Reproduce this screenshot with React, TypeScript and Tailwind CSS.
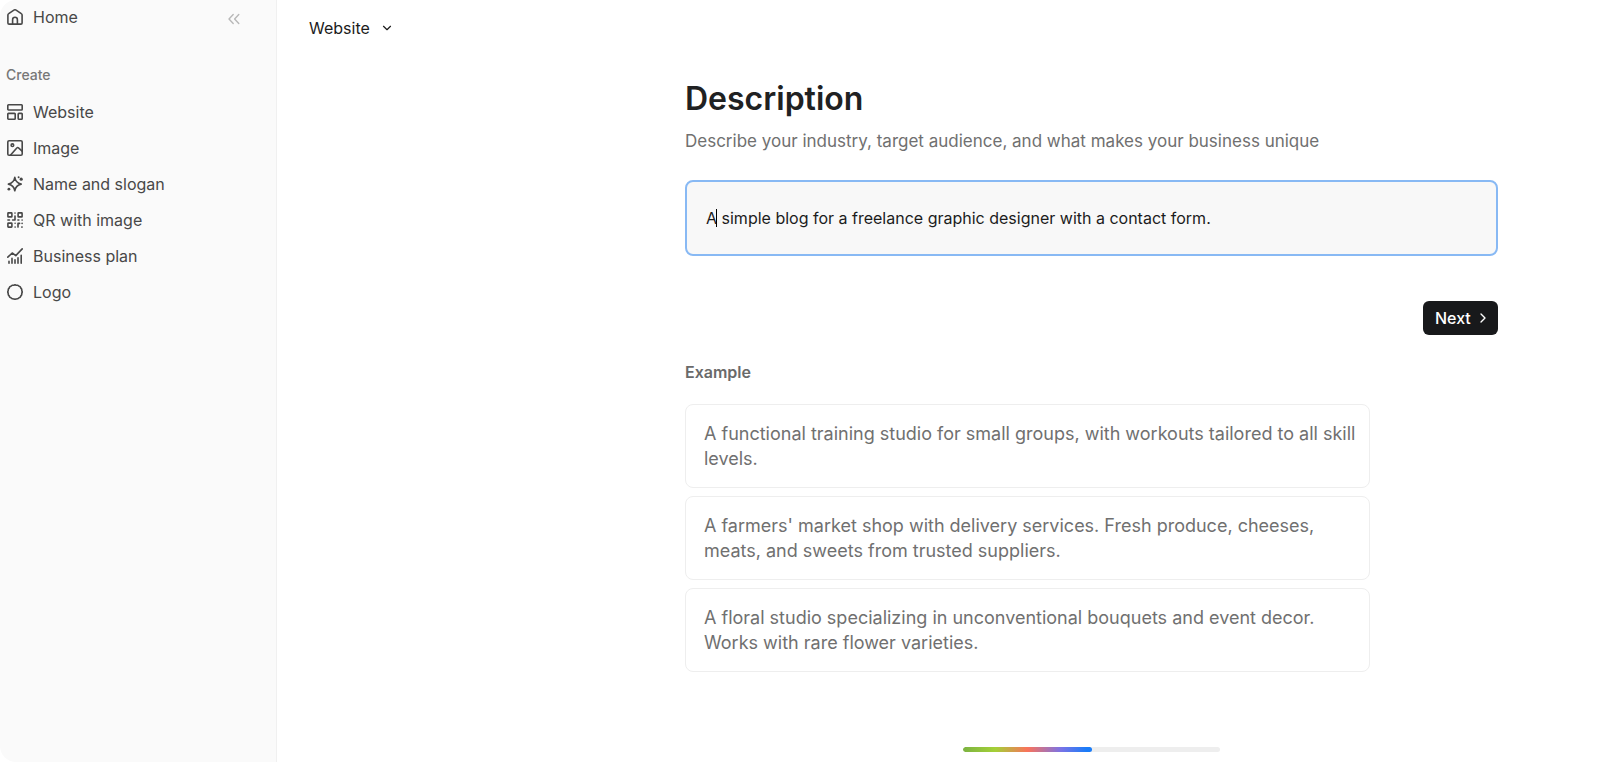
import { useState } from "react";
import type { ReactNode } from "react";
import { ChevronDown, ChevronRight } from "lucide-react";

const stroke = {
  fill: "none",
  stroke: "currentColor",
  strokeWidth: 1.6,
  strokeLinecap: "round",
  strokeLinejoin: "round",
} as const;

function Icon({ children }: { children: ReactNode }) {
  return (
    <svg viewBox="0 0 16 16" className="size-4 shrink-0" aria-hidden="true" {...stroke}>
      {children}
    </svg>
  );
}

const HomeIcon = () => (
  <Icon>
    <path d="M.9 6c0-.6.3-1.100.8-1.400L6.900 1.100c.7-.4 1.500-.4 2.200 0l5.200 3.500c.5.3.8.8.8 1.400v7.900c0 .7-.5 1.200-1.200 1.200H2.100c-.7 0-1.200-.5-1.200-1.200z" />
    <path d="M5.600 15v-4.300a2.400 2.400 0 0 1 4.800 0V15" />
  </Icon>
);

const WebsiteIcon = () => (
  <Icon>
    <rect x=".8" y=".8" width="14.400" height="5.200" rx=".7" />
    <rect x=".8" y="9.400" width="7.400" height="5.800" rx=".7" />
    <rect x="11.200" y="9.400" width="4" height="5.800" rx=".7" />
  </Icon>
);

const ImageIcon = () => (
  <Icon>
    <rect x=".8" y=".8" width="14.400" height="14.400" rx="1.300" />
    <circle cx="5.400" cy="5.200" r="1.300" />
    <path d="m3.600 15 6.200-7c.5-.6 1.200-.6 1.700-.1l3.600 3.300" />
  </Icon>
);

const SparkleIcon = () => (
  <Icon>
    <path d="M7.800 1.400c.7 4.200 2.200 5.900 6.400 6.700-4.200.8-5.700 2.500-6.400 6.700-.7-4.200-2.200-5.900-6.400-6.700 4.200-.8 5.700-2.500 6.400-6.700z" />
    <g fill="currentColor" stroke="none">
      <circle cx="14.200" cy="3.200" r="1.600" />
      <circle cx="11.600" cy="1.200" r="1" />
      <circle cx="1.900" cy="13.200" r="1.400" />
    </g>
  </Icon>
);

const QrIcon = () => (
  <Icon>
    <rect x=".9" y=".9" width="4" height="4" rx=".5" />
    <rect x="11.100" y=".9" width="4" height="4" rx=".5" />
    <rect x=".9" y="11.100" width="4" height="4" rx=".5" />
    <path d="M8 1v.1M8 4v4H5.600M.9 8h1.600M10.900 8h1M15.100 8v.1M8.100 11.200v.1M8.100 15v.1M11 15.100v-3.700h1.600M15.100 11.300v.1M14.800 15.100h.3" />
  </Icon>
);

const PlanIcon = () => (
  <Icon>
    <path d="m.8 9.200 4.400-4.200 3.600 2.600L15.200.9" />
    <path d="M2 15.200v-2M5 15.200V10.400M8 15.200v-3.400M11 15.200V9.800M14.200 15.200V7.200" />
  </Icon>
);

const LogoIcon = () => (
  <Icon>
    <path d="M8 .7Q9.300 1.400 10.800 1.300 11.800 2.400 13.200 2.800 13.600 4.200 14.700 5.200 14.600 6.700 15.300 8 14.600 9.300 14.700 10.800 13.600 11.800 13.200 13.200 11.800 13.600 10.800 14.700 9.300 14.600 8 15.300 6.700 14.600 5.200 14.700 4.200 13.600 2.800 13.200 2.400 11.800 1.300 10.800 1.400 9.300.7 8 1.400 6.700 1.300 5.200 2.400 4.200 2.800 2.800 4.200 2.400 5.200 1.300 6.700 1.400 8 .7z" />
  </Icon>
);

const links = [
  { label: "Website", icon: <WebsiteIcon /> },
  { label: "Image", icon: <ImageIcon /> },
  { label: "Name and slogan", icon: <SparkleIcon /> },
  { label: "QR with image", icon: <QrIcon /> },
  { label: "Business plan", icon: <PlanIcon /> },
  { label: "Logo", icon: <LogoIcon /> },
];

const examples = [
  "A functional training studio for small groups, with workouts tailored to all skill levels.",
  "A farmers' market shop with delivery services. Fresh produce, cheeses, meats, and sweets from trusted suppliers.",
  "A floral studio specializing in unconventional bouquets and event decor. Works with rare flower varieties.",
];

function Sidebar() {
  return (
    <aside className="w-[277px] shrink-0 rounded-l-2xl border-r border-[#f0f0f0] bg-[#fafafa] text-[#484848]">
      <div className="flex h-[33px] items-center justify-between pr-9 pl-[7px]">
        <a href="#home" className="flex items-center gap-[10px] text-base">
          <HomeIcon />
          Home
        </a>
        <button aria-label="Collapse sidebar" className="pt-1 text-[#b8b8b8]">
          <svg viewBox="0 0 12 12" className="size-3" {...stroke} strokeWidth={1.4}>
            <path d="M5.200 1.500 1 6l4.200 4.500M10.800 1.500 6.600 6l4.200 4.500" />
          </svg>
        </button>
      </div>
      <h2 className="mt-[30px] pl-[6px] text-sm leading-6 font-medium text-[#777777]">Create</h2>
      <nav className="mt-[7px]">
        {links.map(({ label, icon }) => (
          <a
            key={label}
            href={`#${label.toLowerCase().replaceAll(" ", "-")}`}
            className="flex h-9 items-center gap-[10px] pl-[7px] text-base"
          >
            {icon}
            {label}
          </a>
        ))}
      </nav>
    </aside>
  );
}

export default function App() {
  const [text, setText] = useState("A simple blog for a freelance graphic designer with a contact form.");

  return (
    <div className="flex min-h-screen bg-white font-[Inter,sans-serif]">
      <Sidebar />
      <main className="flex min-w-0 flex-1 flex-col">
        <header className="flex h-14 items-center pl-8">
          <button className="flex items-center gap-[10px] text-base text-[#1c1c1c]">
            Website
            <ChevronDown className="size-[14px]" />
          </button>
        </header>

        <div className="mr-[102px] ml-[408px] flex flex-1 flex-col">
          <h1 className="mt-[21px] text-[32px] leading-[44px] font-semibold text-[#202122]">Description</h1>
          <label htmlFor="description" className="mt-[7px] text-[17px] leading-[26px] text-[#707070]">
            Describe your industry, target audience, and what makes your business unique
          </label>

          <div className="relative mt-[26px]">
            <input
              id="description"
              value={text}
              onChange={(e) => setText(e.target.value)}
              className="h-[76px] w-full rounded-lg border-2 border-[#88b9f4] bg-[#f8f8f8] px-[19px] text-base text-[#1c1c1c] caret-transparent outline-none"
            />
            <span className="absolute top-[29px] left-[31px] h-[18px] w-px bg-black" />
          </div>

          <button className="mt-[45px] flex h-[34px] w-[75px] items-center gap-1 self-end rounded-md bg-[#18191b] pl-3 text-base font-medium text-white">
            Next
            <ChevronRight className="size-4" />
          </button>

          <h2 className="mt-[25px] text-base font-semibold text-[#6a6a6a]">Example</h2>
          <div className="mt-5 mr-32 flex flex-col gap-2">
            {examples.map((example) => (
              <button
                key={example}
                onClick={() => setText(example)}
                className="rounded-lg border border-[#eeeeee] py-4 pr-2 pl-[18px] text-left text-lg leading-[25px] text-[#707070]"
              >
                {example}
              </button>
            ))}
          </div>

          <div
            role="progressbar"
            aria-label="Progress"
            aria-valuenow={50}
            className="mt-auto mb-[10px] h-[5px] w-[257px] self-center overflow-hidden rounded-full bg-[#eeeeee]"
          >
            <div className="h-full w-1/2 rounded-full bg-[linear-gradient(90deg,#7cb342_0%,#a4d037_25%,#f9735b_50%,#7a73e6_76%,#1a7cf8_96%)]" />
          </div>
        </div>
      </main>
    </div>
  );
}
